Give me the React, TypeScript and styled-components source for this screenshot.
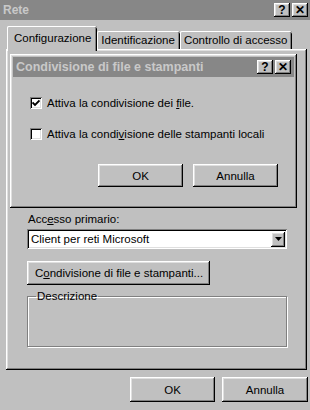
import React from "react";
import styled, { createGlobalStyle } from "styled-components";

const GlobalStyle = createGlobalStyle`
  html, body {
    margin: 0;
    padding: 0;
    background: #c0c0c0;
  }
  body {
    width: 310px;
    height: 410px;
    overflow: hidden;
    font-family: "Liberation Sans", Arial, sans-serif;
    font-size: 11.5px;
    color: #000;
  }
`;

const raised = `
  box-shadow: inset -1px -1px #000, inset 1px 1px #fff, inset -2px -2px #808080,
    inset 2px 2px #dfdfdf;
`;

const sunken = `
  box-shadow: inset 1px 1px #808080, inset -1px -1px #fff, inset 2px 2px #000,
    inset -2px -2px #dfdfdf;
`;

const Window = styled.div`
  width: 310px;
  height: 410px;
  background: #c0c0c0;
  display: flex;
  flex-direction: column;
`;

const TitleBar = styled.div<{ $inner?: boolean }>`
  height: 20px;
  flex: none;
  background: #878787;
  display: flex;
  align-items: center;
  gap: 2px;
  padding: ${(p) => (p.$inner ? "0 3px 0 3px" : "0 2px 0 3px")};
`;

const TitleText = styled.span<{ $size?: number }>`
  flex: 1;
  color: #c9c9c9;
  font-size: ${(p) => p.$size ?? 12}px;
  font-weight: bold;
`;

const TitleButton = styled.div`
  width: 16px;
  height: 14px;
  background: #c0c0c0;
  ${raised}
  display: flex;
  align-items: center;
  justify-content: center;
  font-size: 12px;
  font-weight: bold;
  line-height: 1;
`;

const TabRow = styled.div`
  display: flex;
  align-items: flex-end;
  height: 21px;
  margin-top: 8px;
  padding-left: 7px;
  position: relative;
  z-index: 1;
`;

const Tab = styled.div<{ $active?: boolean }>`
  height: ${(p) => (p.$active ? "23px" : "18px")};
  margin-bottom: ${(p) => (p.$active ? "-2px" : "0")};
  padding: ${(p) => (p.$active ? "0 6px 2px 7px" : "0 5px 0 4px")};
  display: flex;
  align-items: center;
  background: #c0c0c0;
  border-radius: 2px 2px 0 0;
  box-shadow: inset 1px 0 #fff, inset 0 1px #fff, inset -1px 0 #000,
    inset -2px 0 #808080;
  white-space: nowrap;
`;

const Panel = styled.div`
  margin-left: 6px;
  width: 301px;
  height: 321px;
  box-sizing: border-box;
  background: #c0c0c0;
  ${raised}
  display: flex;
  flex-direction: column;
  padding: 5px 0 0 4px;
`;

const Dialog = styled.div`
  width: 287px;
  box-sizing: border-box;
  padding: 3px;
  background: #c0c0c0;
  ${raised}
  display: flex;
  flex-direction: column;
`;

const DialogBody = styled.div`
  display: flex;
  flex-direction: column;
  padding: 19px 16px 18px 17px;
`;

const CheckRow = styled.label<{ $gap?: number }>`
  display: flex;
  align-items: center;
  gap: 5px;
  height: 13px;
  margin-top: ${(p) => p.$gap ?? 0}px;
`;

const CheckBox = styled.span`
  width: 12px;
  height: 12px;
  box-sizing: border-box;
  background: #fff;
  ${sunken}
  display: flex;
  align-items: center;
  justify-content: center;
`;

const ButtonRow = styled.div`
  display: flex;
  justify-content: flex-end;
  gap: 10px;
  margin-top: 24px;
`;

const Button = styled.div<{ $w: number; $h?: number }>`
  width: ${(p) => p.$w}px;
  height: ${(p) => p.$h ?? 23}px;
  box-sizing: border-box;
  background: #c0c0c0;
  ${raised}
  display: flex;
  align-items: center;
  justify-content: center;
  white-space: nowrap;
`;

const Content = styled.div`
  display: flex;
  flex-direction: column;
  padding-left: 17px;
`;

const Label = styled.div`
  margin-top: 5px;
  line-height: 13px;
  padding-left: 1px;
`;

const Select = styled.div`
  margin-top: 3px;
  width: 260px;
  height: 20px;
  box-sizing: border-box;
  background: #fff;
  ${sunken}
  display: flex;
  align-items: center;
  padding: 0 2px 0 4px;
`;

const SelectText = styled.span`
  flex: 1;
`;

const ArrowButton = styled.div`
  width: 14px;
  height: 15px;
  background: #c0c0c0;
  ${raised}
  display: flex;
  align-items: center;
  justify-content: center;
`;

const WideButton = styled(Button)`
  margin-top: 12px;
  justify-content: flex-start;
  padding-left: 8px;
`;

const Group = styled.fieldset`
  margin: 5px 0 0 0;
  padding: 0;
  width: 260px;
  height: 57px;
  box-sizing: border-box;
  border: 1px solid #808080;
  box-shadow: inset 1px 1px #fff, 1px 1px #fff;
`;

const Legend = styled.legend`
  margin-left: 8px;
  padding: 0 1px;
  line-height: 13px;
`;

const Footer = styled.div`
  display: flex;
  justify-content: flex-end;
  gap: 7px;
  margin-top: 7px;
  padding-right: 2px;
`;

const U = styled.span`
  text-decoration: underline;
`;

const Check = () => (
  <svg width="8" height="8" viewBox="0 0 8 8">
    <path d="M0.5 3.5 L3 6 L7.5 1.5" stroke="#000" strokeWidth="1.8" fill="none" />
  </svg>
);

const Arrow = () => (
  <svg width="7" height="4" viewBox="0 0 7 4">
    <path d="M0 0 H7 L3.5 4 Z" fill="#000" />
  </svg>
);

export default function App() {
  return (
    <>
      <GlobalStyle />
      <Window>
        <TitleBar>
          <TitleText>Rete</TitleText>
          <TitleButton>?</TitleButton>
          <TitleButton>✕</TitleButton>
        </TitleBar>
        <TabRow>
          <Tab $active>Configurazione</Tab>
          <Tab>Identificazione</Tab>
          <Tab>Controllo di accesso</Tab>
        </TabRow>
        <Panel>
          <Dialog>
            <TitleBar $inner>
              <TitleText $size={12.5}>Condivisione di file e stampanti</TitleText>
              <TitleButton>?</TitleButton>
              <TitleButton>✕</TitleButton>
            </TitleBar>
            <DialogBody>
              <CheckRow>
                <CheckBox>
                  <Check />
                </CheckBox>
                <span>
                  Attiva la condivisione dei <U>f</U>ile.
                </span>
              </CheckRow>
              <CheckRow $gap={18}>
                <CheckBox />
                <span>
                  Attiva la condi<U>v</U>isione delle stampanti locali
                </span>
              </CheckRow>
              <ButtonRow>
                <Button $w={85}>OK</Button>
                <Button $w={85}>Annulla</Button>
              </ButtonRow>
            </DialogBody>
          </Dialog>
          <Content>
            <Label>
              Acc<U>e</U>sso primario:
            </Label>
            <Select>
              <SelectText>Client per reti Microsoft</SelectText>
              <ArrowButton>
                <Arrow />
              </ArrowButton>
            </Select>
            <WideButton $w={183} $h={24}>
              C<U>o</U>ndivisione di file e stampanti...
            </WideButton>
            <Group>
              <Legend>Descrizione</Legend>
            </Group>
          </Content>
        </Panel>
        <Footer>
          <Button $w={85} $h={25}>
            OK
          </Button>
          <Button $w={86} $h={25}>
            Annulla
          </Button>
        </Footer>
      </Window>
    </>
  );
}
